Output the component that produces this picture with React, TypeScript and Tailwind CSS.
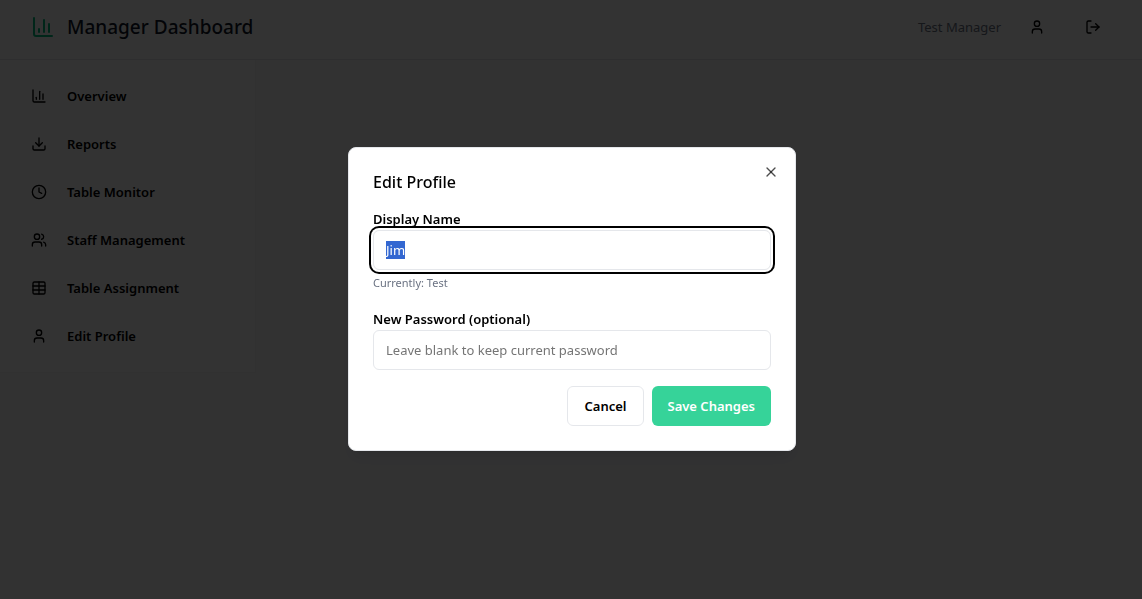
import { useEffect, useRef } from "react";
import {
  ChartColumn,
  Clock,
  Download,
  LogOut,
  Table,
  User,
  Users,
  X,
  type LucideIcon,
} from "lucide-react";

const navItems: { label: string; icon: LucideIcon }[] = [
  { label: "Overview", icon: ChartColumn },
  { label: "Reports", icon: Download },
  { label: "Table Monitor", icon: Clock },
  { label: "Staff Management", icon: Users },
  { label: "Table Assignment", icon: Table },
  { label: "Edit Profile", icon: User },
];

function Header() {
  return (
    <header className="flex h-15 items-center justify-between border-b border-gray-200 bg-white pr-[29px] pb-[5px] pl-[31px]">
      <div className="flex items-center gap-3">
        <ChartColumn className="size-6 text-emerald-500" />
        <h1 className="text-[19px] leading-7 font-medium text-gray-900">Manager Dashboard</h1>
      </div>
      <div className="flex items-center gap-4">
        <span className="text-[13px] leading-5 text-gray-500">Test Manager</span>
        <button type="button" aria-label="Profile" className="flex size-10 items-center justify-center">
          <User className="size-4" />
        </button>
        <button type="button" aria-label="Log out" className="flex size-10 items-center justify-center">
          <LogOut className="size-4" />
        </button>
      </div>
    </header>
  );
}

function Sidebar() {
  return (
    <aside className="w-64 shrink-0 border-r border-b border-gray-100 bg-white p-4">
      <nav className="flex flex-col gap-2">
        {navItems.map(({ label, icon: Icon }) => (
          <button
            key={label}
            type="button"
            className="flex h-10 items-center gap-5 rounded-md px-[15px] text-[13px] leading-5 font-semibold"
          >
            <Icon className="size-4" />
            {label}
          </button>
        ))}
      </nav>
    </aside>
  );
}

function EditProfileDialog() {
  const nameRef = useRef<HTMLInputElement>(null);

  useEffect(() => {
    nameRef.current?.focus();
    nameRef.current?.select();
  }, []);

  return (
    <div className="fixed inset-0 flex items-center justify-center bg-black/80 pb-px pl-[2px]">
      <div
        role="dialog"
        aria-modal="true"
        aria-labelledby="dialog-title"
        className="relative w-full max-w-md rounded-lg border border-gray-200 bg-white p-6 shadow-lg"
      >
        <h2 id="dialog-title" className="text-[16px] leading-5 font-medium">
          Edit Profile
        </h2>
        <button type="button" aria-label="Close" className="absolute top-4 right-4 text-black/70">
          <X className="size-4" />
        </button>
        <form className="mt-4 flex flex-col gap-4" onSubmit={(event) => event.preventDefault()}>
          <div className="flex flex-col">
            <label htmlFor="display-name" className="text-[13px] leading-[22px] font-semibold">
              Display Name
            </label>
            <input
              ref={nameRef}
              id="display-name"
              type="text"
              defaultValue="Jim"
              className="h-10 w-full rounded-md border border-gray-200 bg-white px-3 text-[13px] leading-5 outline-none selection:bg-[#3367d1] selection:text-white focus:ring-2 focus:ring-black focus:ring-offset-2"
            />
            <p className="mt-1 text-[11px] leading-[18px] text-gray-500">Currently: Test</p>
          </div>
          <div className="flex flex-col">
            <label htmlFor="new-password" className="text-[13px] leading-[22px] font-semibold">
              New Password (optional)
            </label>
            <input
              id="new-password"
              type="password"
              placeholder="Leave blank to keep current password"
              className="h-10 w-full rounded-md border border-gray-200 bg-white px-3 text-[13px] leading-5 placeholder:text-[#757575]"
            />
          </div>
          <div className="flex justify-end gap-2">
            <button
              type="button"
              className="h-10 rounded-md border border-gray-200 bg-white px-4 text-[13px] leading-5 font-semibold"
            >
              Cancel
            </button>
            <button
              type="submit"
              className="h-10 rounded-md bg-[#36d399] px-4 text-[13px] leading-5 font-semibold text-white"
            >
              Save Changes
            </button>
          </div>
        </form>
      </div>
    </div>
  );
}

export default function App() {
  return (
    <div className="min-h-screen bg-gray-50 font-['Noto_Sans',sans-serif] text-black">
      <Header />
      <div className="flex items-start">
        <Sidebar />
        <main className="flex-1" />
      </div>
      <EditProfileDialog />
    </div>
  );
}
